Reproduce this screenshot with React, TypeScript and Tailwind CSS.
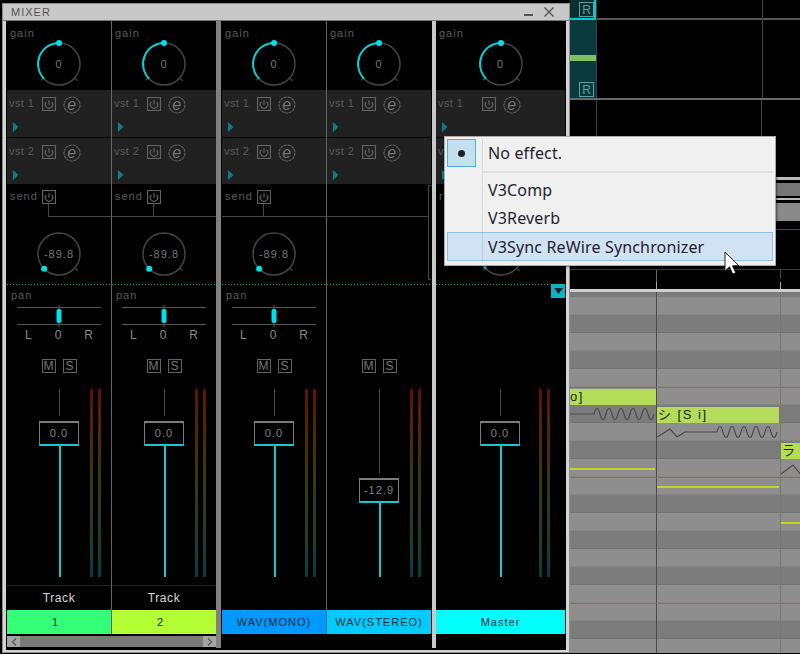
import { FC, ReactNode } from 'react'

const LABEL = 'text-[11px] leading-[10px] tracking-[1px] text-[#5a5a5a]'

const PowerButton = () => (
  <svg width="14" height="14" viewBox="0 0 14 14" fill="none" stroke="#626262" className="shrink-0">
    <rect x="0.5" y="0.5" width="13" height="13" strokeWidth="1.2" />
    <path d="M4.3 5a3.7 3.7 0 1 0 5.4 0" strokeWidth="1.2" />
    <path d="M7 3.2v4.6" strokeWidth="1.2" />
  </svg>
)

const EditButton = () => (
  <svg width="18" height="18" viewBox="0 0 18 18" fill="none" className="shrink-0">
    <circle cx="9" cy="9" r="8" stroke="#626262" strokeWidth="1.1" strokeDasharray="3.2 0.6" />
    <text x="8.7" y="13.5" textAnchor="middle" fontSize="16" fontStyle="italic" fill="#747474" fontFamily="Liberation Sans">
      e
    </text>
  </svg>
)

const BoxButton: FC<{ children: ReactNode }> = ({ children }) => (
  <div className="w-[14px] h-[14px] border border-[#626262] flex items-center justify-center text-[12px] leading-none text-[#777]">
    {children}
  </div>
)

// mode: gain has the arc and top dot, send only the dot down at min
const Knob: FC<{ value: string; mode: 'gain' | 'send' }> = ({ value, mode }) => (
  <div className="relative w-[56px] h-[56px] mx-auto">
    <svg width="56" height="56" viewBox="0 0 56 56" fill="none">
      <circle cx="28" cy="28" r="21" stroke="#444" strokeWidth="1.5" />
      <path d="M12.5 42l-2.6 2.4M43.5 42l3.2 2.8" stroke="#444" strokeWidth="1.2" />
      {mode === 'gain' && (
        <>
          <path d="M28 7A21 21 0 0 0 13.2 42.8" stroke="#00d4dc" strokeWidth="1.9" />
          <circle cx="28" cy="7" r="3" fill="#00e0e8" />
        </>
      )}
      {mode === 'send' && <circle cx="13.2" cy="42.8" r="3" fill="#00e0e8" />}
    </svg>
    <div className="absolute inset-0 flex items-center justify-center text-[11px] tracking-[1px] text-[#777]">{value}</div>
  </div>
)

const VstRow: FC<{ label: string; master?: boolean; className: string }> = ({ label, master, className }) => (
  <div className={`bg-[#212121] pt-[7px] ${className}`}>
    <div className="flex items-start h-[18px]">
      <div className={`${master ? 'w-[46px] pl-[2px]' : 'w-[35px] pl-[2px]'} text-[11px] leading-[13px] tracking-[0.4px] text-[#5a5a5a]`}>{label}</div>
      <PowerButton />
      <div className="w-[7px]" />
      <div className="-mt-[1px]">
        <EditButton />
      </div>
    </div>
    <svg width="6" height="10" viewBox="0 0 6 10" className="mt-[7px] ml-[6px]">
      <path d="M0 0l5.5 5L0 10z" fill="#0a7f88" />
    </svg>
  </div>
)

type StripProps = {
  value: string
  faderTop: string
  color: string
  name: string
  track?: boolean
  send?: 'first' | 'through' | 'end' | 'return'
  master?: boolean
  nameClass?: string
}

const Strip: FC<StripProps> = ({ value, faderTop, color, name, track, send, master, nameClass }) => (
  <div className={`${master ? 'w-[129px]' : 'w-[104px]'} h-[613px] flex flex-col shrink-0 relative`}>
    <div className="h-[69px] pt-[7px]">
      <div className={`${LABEL} pl-[3px]`}>gain</div>
      <div className="-mt-[2px]">
        <Knob value="0" mode="gain" />
      </div>
    </div>
    <VstRow label="vst 1" master={master} className="h-[47px]" />
    <div className="h-px" />
    <VstRow label="vst 2" master={master} className="h-[46px]" />

    <div className="h-[100px] relative">
      {send !== 'end' && (
        <div className="flex h-[20px] pt-[6px]">
          <div className={`${master ? 'w-[46px]' : 'w-[35px]'} ${LABEL} pl-[3px] pt-[1px]`}>{master ? 'return' : 'send'}</div>
          <PowerButton />
        </div>
      )}
      {send === 'end' && <div className="h-[20px]" />}
      {send === 'first' && <div className="h-[13px] ml-[41px] border-l border-b border-[#444]" />}
      {send === 'through' && (
        <div className="flex h-[13px]">
          <div className="w-[41px] border-b border-[#444]" />
          <div className="flex-1 border-l border-b border-[#444]" />
        </div>
      )}
      {send === 'end' && <div className="h-[13px] w-[101px] border-b border-[#444]" />}
      {send === 'end' && (
        <div className="absolute right-0 top-[1px] w-[3px] h-[95px] border-l border-t border-b border-[#444]" />
      )}
      {master && <div className="h-[13px]" />}
      {send !== 'end' && (
        <div className="mt-[9px]">
          <Knob value={master ? '' : '-89.8'} mode={master ? 'gain' : 'send'} />
        </div>
      )}
    </div>

    <div
      className={`h-px bg-[repeating-linear-gradient(90deg,#0a9aa2_0_1px,transparent_1px_3px)] ${master ? 'mr-[15px]' : ''}`}
    />

    <div className="h-[104px]">
      {!master && send !== 'end' && (
        <>
          <div className={`${LABEL} h-[20px] pl-[4px] pt-[5px]`}>pan</div>
          <div className="relative h-[22px] mx-[10px] flex flex-col justify-between py-[2px]">
            <div className="h-px bg-[#555]" />
            <div className="h-px bg-[#555]" />
            <div className="absolute left-1/2 top-0 h-full w-px -translate-x-1/2 bg-[#555]" />
            <div className="absolute left-1/2 top-[4px] h-[14px] w-[5px] -translate-x-1/2 rounded-[2px] bg-[#00e0ec]" />
          </div>
          <div className="flex justify-between px-[18px] h-[16px] items-center text-[12px] leading-none text-[#8a8a8a]">
            <span>L</span>
            <span>0</span>
            <span>R</span>
          </div>
        </>
      )}
      {send === 'end' && <div className="h-[58px]" />}
      {!master && (
        <div className="flex justify-center gap-[7px] mt-[16px]">
          <BoxButton>M</BoxButton>
          <BoxButton>S</BoxButton>
        </div>
      )}
    </div>

    <div className={`h-[188px] flex ${master ? 'pl-[44px]' : 'pl-[32px]'}`}>
      <div className="w-[40px] flex flex-col items-center">
        <div className={`w-px bg-[#4a4a4a] ${faderTop}`} />
        <div className="mt-[5px] w-[40px] h-[25px] shrink-0 border-x border-t-2 border-b-2 border-[#7c7c7c] border-b-[#18c8d0] flex items-center justify-center text-[11px] tracking-[1px] text-[#808080]">
          {value}
        </div>
        <div className="flex-1 w-[2px] translate-x-[1px] bg-[#14c8d0]" />
      </div>
      <div className={`${master ? 'ml-[19px]' : 'ml-[11px]'} flex gap-[5px]`}>
        <div className="w-[3px] h-full bg-linear-to-b from-[#5c1000] via-[#383a08] to-[#003c44]" />
        <div className="w-[3px] h-full bg-linear-to-b from-[#5c1000] via-[#383a08] to-[#003c44]" />
      </div>
    </div>

    <div className="h-[8px]" />
    {track ? (
      <>
        <div className="h-px bg-[#222]" />
        <div className="h-[24px] flex items-center justify-center text-[12px] tracking-[0.6px] text-[#d8d8d8]">Track</div>
      </>
    ) : (
      <div className="h-[25px]" />
    )}
    <div className={`h-[24px] flex items-center justify-center text-[11px] tracking-[1px] text-[#0d2a3a] ${color} ${nameClass ?? ''}`}>
      {name}
    </div>
  </div>
)

const ThinSep = () => <div className="w-px h-[613px] bg-[#666] shrink-0" />

const ScrollBar = () => (
  <div className="h-[14px] pt-[2px] flex bg-black">
    <div className="flex-1 h-[11px] flex bg-[#7a7a7a]">
      <div className="w-[13px] bg-[#a4a4a4] flex items-center justify-center">
        <svg width="6" height="8" viewBox="0 0 6 8" fill="none" stroke="#555" strokeWidth="1.2">
          <path d="M5 0.5L1.5 4 5 7.5" />
        </svg>
      </div>
      <div className="flex-1" />
      <div className="w-[13px] bg-[#a4a4a4] flex items-center justify-center">
        <svg width="6" height="8" viewBox="0 0 6 8" fill="none" stroke="#555" strokeWidth="1.2">
          <path d="M1 0.5L4.5 4 1 7.5" />
        </svg>
      </div>
    </div>
  </div>
)

const Mixer = () => (
  <div className="absolute left-[2px] top-[3px] w-[568px] h-[650px] border border-[#8c8c8c] bg-[#d4d4d4] pb-[2px] px-[3px]">
    <div className="h-[17px] -mx-[3px] px-[8px] bg-[#c8c8c8] border-b border-[#777] flex items-center">
      <span className="text-[11px] tracking-[1px] text-[#555]">MIXER</span>
      <div className="ml-auto flex items-end gap-[11px] pr-[7px]">
        <div className="w-[9px] h-[2px] bg-[#555] mb-[1px]" />
        <svg width="10" height="10" viewBox="0 0 10 10" stroke="#555" strokeWidth="1.4">
          <path d="M0.5 0.5l9 9M9.5 0.5l-9 9" />
        </svg>
      </div>
    </div>
    <div className="h-[629px] bg-black flex items-start">
      <div className="flex flex-col pl-px w-[210px] shrink-0">
        <div className="flex">
          <Strip value="0.0" faderTop="h-[27px]" color="bg-[#33ff77]" name="1" nameClass="pr-[7px]" track send="first" />
          <ThinSep />
          <Strip value="0.0" faderTop="h-[27px]" color="bg-[#b4ff33]" name="2" nameClass="pr-[7px]" track send="through" />
        </div>
        <ScrollBar />
      </div>
      <div className="w-[5px] h-[627px] bg-[#808080] mr-px shrink-0" />
      <Strip value="0.0" faderTop="h-[27px]" color="bg-[#0099ff]" name="WAV(MONO)" send="through" />
      <ThinSep />
      <Strip value="-12.9" faderTop="h-[84px]" color="bg-[#00ccff]" name="WAV(STEREO)" send="end" />
      <div className="w-[4px] h-[627px] bg-[#c8c8c8] ml-px mr-0 shrink-0" />
      <div className="relative">
        <Strip value="0.0" faderTop="h-[27px]" color="bg-[#00ffff]" name="Master" send="return" master />
        <div className="absolute right-0 top-[263px] w-[14px] h-[14px] bg-[#0ab4c0] flex items-center justify-center">
          <svg width="9" height="6" viewBox="0 0 9 6">
            <path d="M0 0h9L4.5 6z" fill="#06252a" />
          </svg>
        </div>
      </div>
    </div>
  </div>
)

const EffectMenu = () => (
  <div className="absolute left-[444px] top-[136px] w-[332px] h-[130px] bg-[#f0f0f0] border border-[#a8a8a8] shadow-[1px_1px_2px_rgba(0,0,0,0.5)] p-[2px] font-['Noto_Sans',sans-serif] text-[16px] tracking-[0.15px] text-[#23232f]">
    <div className="flex items-center h-[28px]">
      <div className="w-[29px] h-[28px] bg-[#c4e0ee] border border-[#4cb0e4] flex items-center justify-center">
        <div className="w-[7px] h-[7px] rounded-full bg-[#222]" />
      </div>
      <span className="ml-[12px]">No effect.</span>
    </div>
    <div className="ml-[36px] mt-[4px] mb-[3px] h-[2px] bg-[#e0e0e0]" />
    <div className="h-[28px] pl-[41px] flex items-center">V3Comp</div>
    <div className="h-[28px] pl-[41px] flex items-center">V3Reverb</div>
    <div className="h-[29px] pl-[40px] flex items-center bg-[#d1e2f3] border border-[#92c0ee]">V3Sync ReWire Synchronizer</div>
    <div className="absolute left-[37px] top-[2px] bottom-[2px] w-px bg-[#0000001a]" />
  </div>
)

// l = light row, d = dark row, from y 298 down
const ROLL_ROWS = ['l', 'd', 'l', 'd', 'l', 'l', 'd', 'l', 'd', 'l', 'l', 'd', 'l', 'd', 'l', 'd', 'l', 'l', 'd', 'l']

const PianoRoll = () => (
  <div className="relative h-[364px] overflow-hidden border-t-[3px] border-[#cfcfcf]">
    <div className="h-[5px] bg-[#7c7c7c]" />
    {ROLL_ROWS.map((row, i) => (
      <div
        key={i}
        className={`h-[18px] ${row === 'd' ? 'bg-[#7c7c7c] border-b border-[#747474]' : 'bg-[#8e8e8e] border-b border-[#868686]'}`}
      />
    ))}

    {/* bar lines and notes sit on top of the rows */}
    <div className="absolute left-[86px] inset-y-0 w-px bg-[#4a4a4a]" />
    <div className="absolute left-[210px] inset-y-0 w-px bg-[#7d7866]" />
    <div className="absolute inset-x-0 top-[95px] h-px bg-[#7d7866]" />
    <div className="absolute inset-x-0 top-[185px] h-px bg-[#7d7866]" />
    <div className="absolute inset-x-0 top-[311px] h-px bg-[#7d7866]" />

    <Note className="left-0 top-[97px] w-[86px]" text="o]" />
    <Note className="left-[87px] top-[115px] w-[122px] pl-[1px]" text="シ [S i]" />
    <Note className="left-[211px] top-[151px] w-[19px] pl-[1px]" text="ラ" />

    <div className="absolute left-0 top-[176px] w-[85px] h-[2px] bg-[#c4d428]" />
    <div className="absolute left-[87px] top-[194px] w-[122px] h-[2px] bg-[#c4d428]" />
    <div className="absolute left-[211px] top-[230px] w-[19px] h-[2px] bg-[#c4d428]" />

    <svg className="absolute left-0 top-0" width="230" height="200" fill="none" stroke="#4a4a48" strokeWidth="1.2">
      <path d="M0 122H24q3-11 6 0t6 0t6 0t6 0t6 0t6 0t6 0t6 0t6 0t6 0" />
      <path d="M87 145L100 137L107 145L115 140H147q3-11 6 0t6 0t6 0t6 0t6 0t6 0t6 0t6 0t6 0t6 0" />
      <path d="M211 182L223 173L230 182" />
    </svg>
  </div>
)

const Note: FC<{ className: string; text: string }> = ({ className, text }) => (
  <div
    className={`absolute h-[16px] bg-[#b4dc58] flex items-center text-[13px] tracking-[1.5px] text-[#222] font-['Liberation_Sans','Noto_Sans_CJK_JP',sans-serif] ${className}`}
  >
    {text}
  </div>
)

const RBox = () => (
  <div className="w-[15px] h-[15px] border border-[#5ea0a0] flex items-center justify-center text-[12px] leading-none text-[#5ea0a0]">
    R
  </div>
)

// the editor that is behind the mixer, only the part right of it shows
const Editor = () => (
  <div className="ml-[570px] w-[230px] h-[654px] flex flex-col">
    <div className="flex h-[98px] shrink-0">
      <div className="w-[26px] flex flex-col">
        <div className="h-[20px] bg-[#0a3034] border-r-2 border-b-2 border-[#0cc8cc] pt-[2px] pl-[9px]">
          <RBox />
        </div>
        <div className="flex-1 bg-[#0a3a3e] flex flex-col pt-[35px] pl-[9px]">
          <div className="h-[6px] -ml-[9px] bg-[#80c060]" />
          <div className="mt-auto mb-[1px]">
            <RBox />
          </div>
        </div>
      </div>
      <div className="flex-1 border-l border-[#3c3c3c] relative">
        <div className="h-[20px] border-b-2 border-[#555]" />
        <div className="absolute left-[165px] inset-y-0 w-px bg-[#444]" />
      </div>
    </div>
    <div className="h-[2px] bg-[#686868]" />
    <div className="h-[77px] relative">
      <div className="absolute left-[26px] top-0 h-[36px] w-px bg-[#3c3c3c]" />
      <div className="absolute left-[191px] top-0 h-[36px] w-px bg-[#444]" />
    </div>
    <div className="h-[3px] bg-[#bcbcbc]" />
    <div className="h-[13px] mt-[3px] bg-[#777]" />
    <div className="h-[2px] mt-[2px] bg-[#bcbcbc]" />
    <div className="h-[18px] mt-[3px] bg-[#8a8a8a]" />
    <div className="h-px mt-[8px] bg-[#0a6468]" />
    <div className="h-[39px]" />
    <div className="h-px bg-[#3c3c3c]" />
    <div className="relative h-[19px]">
      <div className="absolute left-[86px] top-0 h-full w-px bg-[#6a6a6a]" />
      <div className="absolute left-[210px] top-0 h-[9px] w-px bg-[#444]" />
      <div className="absolute left-[86px] bottom-0 h-[7px] w-px bg-[#aaa]" />
      <div className="absolute left-[210px] bottom-0 h-[7px] w-px bg-[#aaa]" />
    </div>
    <PianoRoll />
  </div>
)

export default function App() {
  return (
    <div className="relative w-[800px] h-[654px] overflow-hidden bg-black font-['Liberation_Sans',sans-serif]">
      <Editor />
      <Mixer />
      <EffectMenu />
      <svg className="absolute left-[724px] top-[251px]" width="16" height="25" viewBox="0 0 16 25">
        <path d="M1 1v19l4.5-4.2 3.2 7.2 3-1.3-3.2-7h6.3z" fill="#fff" stroke="#222" strokeWidth="1" />
      </svg>
    </div>
  )
}
